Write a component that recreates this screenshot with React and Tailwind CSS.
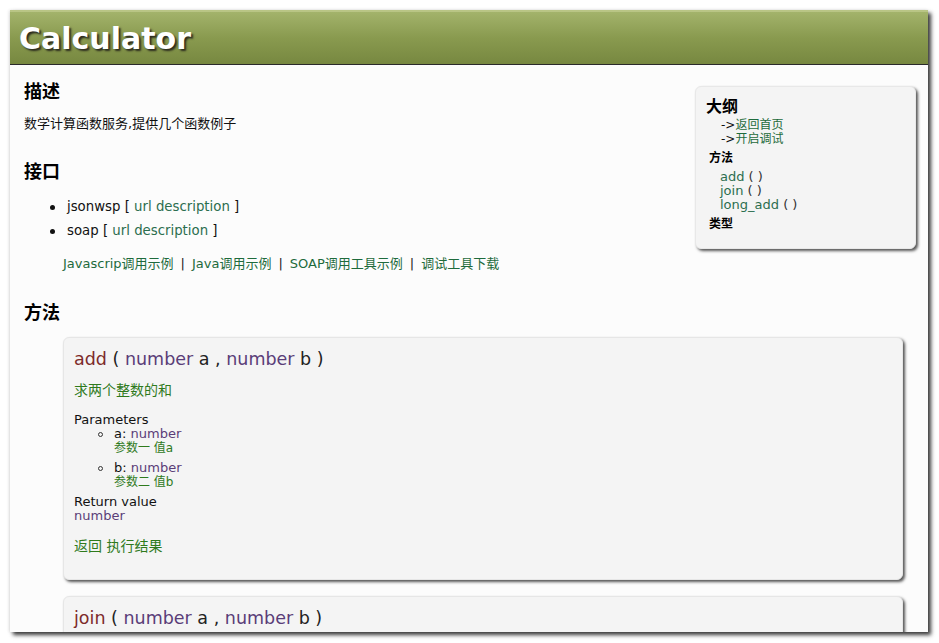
import React from 'react';

const font = { fontFamily: '"DejaVu Sans", Verdana, "Noto Sans CJK SC", sans-serif' };

function Param({ name, desc }) {
    return (
        <div className="flex">
            <div className="w-[40px] flex justify-end pr-[11px] pt-[5px]">
                <span className="block w-[5px] h-[5px] rounded-full border border-[#333]" />
            </div>
            <div>
                <div className="h-[14px] leading-[14px]">
                    {name}: <span className="text-[#5a3d78]">number</span>
                </div>
                <div className="h-[14px] leading-[14px] text-[12px] text-[#2f7a1c]">{desc}</div>
            </div>
        </div>
    );
}

function Signature({ name }) {
    return (
        <div className="h-[22px] leading-[22px] text-[17.5px] text-[#222]">
            <span className="text-[#7d2a2a]">{name}</span> ( <span className="text-[#5a3d78]">number</span> a ,{' '}
            <span className="text-[#5a3d78]">number</span> b )
        </div>
    );
}

export default function App() {
    const links = ['Javascrip调用示例', 'Java调用示例', 'SOAP调用工具示例', '调试工具下载'];

    return (
        <div className="w-[939px] h-[643px] bg-white pt-[10px] pl-[10px] overflow-hidden" style={font}>
            <div className="w-[918px] h-[622px] bg-[#fcfcfc] overflow-hidden shadow-[3px_3px_4px_#3a3a3a,-1px_0_3px_#e4e4e4]">
                {/* header */}
                <div className="h-[55px] bg-gradient-to-b from-[#a3b36b] via-[#899a4f] to-[#778840] border-t-2 border-[#b9c585] border-b border-b-[#2a2a2a] pl-[9px] flex items-center">
                    <h1 className="text-[30px] font-bold text-white leading-none [text-shadow:2px_2px_2px_#2b2b1e] pt-[2px]">
                        Calculator
                    </h1>
                </div>

                <div className="pt-[15px] text-[13px] text-[#111]">
                    {/* outline box */}
                    <div className="float-right mr-[12px] mt-[6px] w-[221px] bg-[#f4f4f4] rounded-[6px] border border-[#e8e8e8] shadow-[2px_2px_3px_#555] pl-[10px] pt-[10px] pb-[16px]">
                        <div className="h-[20px] leading-[20px] text-[16px] font-bold text-black">大纲</div>
                        <div className="pl-[15px] mt-[1px] text-[12px]">
                            <div className="h-[14px] leading-[14px]">-&gt;<span className="text-[#1e6b3c]">返回首页</span></div>
                            <div className="h-[14px] leading-[14px]">-&gt;<span className="text-[#1e6b3c]">开启调试</span></div>
                        </div>
                        <div className="pl-[3px] mt-[4px] h-[16px] leading-[16px] text-[12px] font-bold text-black">方法</div>
                        <div className="pl-[14px] mt-[4px] text-[#333]">
                            {['add', 'join', 'long_add'].map((m) => (
                                <div key={m} className="h-[14px] leading-[14px]">
                                    <span className="text-[#2c6e4f]">{m}</span> ( )
                                </div>
                            ))}
                        </div>
                        <div className="pl-[3px] mt-[4px] h-[16px] leading-[16px] text-[12px] font-bold text-black">类型</div>
                    </div>

                    <div className="pl-[14px]">
                        <h2 className="h-[24px] leading-[24px] text-[18px] font-bold text-black">描述</h2>
                        <p className="mt-[12px] h-[16px] leading-[16px] text-[13px]">数学计算函数服务,提供几个函数例子</p>

                        <h2 className="mt-[28px] h-[24px] leading-[24px] text-[18px] font-bold text-black">接口</h2>
                        <div className="mt-[11px]">
                            {['jsonwsp', 'soap'].map((p) => (
                                <div key={p} className="flex items-center h-[24px]">
                                    <div className="w-[43px] flex justify-end pr-[12px]">
                                        <span className="block w-[5px] h-[5px] rounded-full bg-[#111]" />
                                    </div>
                                    <span className="text-[13.3px]">
                                        {p} [ <span className="text-[#2c6e4f]">url description</span> ]
                                    </span>
                                </div>
                            ))}
                        </div>
                        <div className="mt-[13px] pl-[39px] h-[16px] leading-[16px] text-[13px] text-[#222]">
                            {links.map((l, i) => (
                                <span key={l}>
                                    {i > 0 && <span className="mx-[7px]">|</span>}
                                    <span className="text-[#1e6b3c]">{l}</span>
                                </span>
                            ))}
                        </div>

                        <h2 className="mt-[29px] h-[24px] leading-[24px] text-[18px] font-bold text-black">方法</h2>
                    </div>

                    {/* method cards */}
                    <div className="ml-[53px] mr-[25px] mt-[12px]">
                        <div className="bg-[#f4f4f4] rounded-[6px] border border-[#e6e6e6] shadow-[2px_2px_3px_#555] pl-[10px] pt-[10px] pb-[25px]">
                            <Signature name="add" />
                            <div className="mt-[12px] h-[16px] leading-[16px] text-[14px] text-[#2f7a1c]">求两个整数的和</div>
                            <div className="mt-[15px] h-[14px] leading-[14px]">Parameters</div>
                            <Param name="a" desc="参数一 值a" />
                            <div className="mt-[6px]">
                                <Param name="b" desc="参数二 值b" />
                            </div>
                            <div className="mt-[6px] h-[14px] leading-[14px]">Return value</div>
                            <div className="h-[14px] leading-[14px] text-[#5a3d78]">number</div>
                            <div className="mt-[15px] h-[16px] leading-[16px] text-[14px] text-[#2f7a1c]">返回 执行结果</div>
                        </div>

                        <div className="mt-[16px] bg-[#f4f4f4] rounded-[6px] border border-[#e6e6e6] shadow-[2px_2px_3px_#555] pl-[10px] pt-[10px] pb-[25px]">
                            <Signature name="join" />
                        </div>
                    </div>
                </div>
            </div>
        </div>
    );
}
